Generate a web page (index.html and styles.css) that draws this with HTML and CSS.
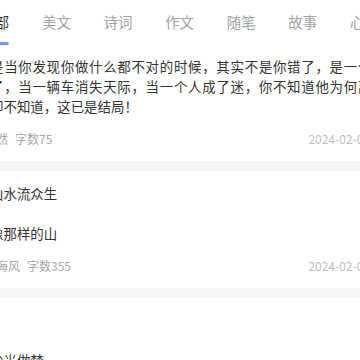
FILE: index.html
```html
<!DOCTYPE html>
<html lang="zh-CN">
<head>
<meta charset="utf-8">
<title>文章列表</title>
<link rel="stylesheet" href="styles.css">
</head>
<body>
<div class="page">
  <nav class="tabs">
    <div class="tab active"><span class="tab-text">全部</span><span class="tab-bar"></span></div>
    <div class="tab"><span class="tab-text">美文</span><span class="tab-bar"></span></div>
    <div class="tab"><span class="tab-text">诗词</span><span class="tab-bar"></span></div>
    <div class="tab"><span class="tab-text">作文</span><span class="tab-bar"></span></div>
    <div class="tab"><span class="tab-text">随笔</span><span class="tab-bar"></span></div>
    <div class="tab"><span class="tab-text">故事</span><span class="tab-bar"></span></div>
    <div class="tab"><span class="tab-text">心情</span><span class="tab-bar"></span></div>
  </nav>

  <article class="item">
    <div class="content">
      <span class="line spread">是当你发现你做什么都不对的时候，其实不是你错了，是一个人</span>
      <span class="line spread">了，当一辆车消失天际，当一个人成了迷，你不知道他为何离开</span>
      <span class="line">却不知道，这已是结局！</span>
    </div>
    <div class="meta"><span class="author">悠然</span><span class="count">字数75</span><span class="date">2024-02-08</span></div>
  </article>

  <article class="item">
    <div class="content">
      <span class="line">山水流众生</span>
      <span class="line empty"></span>
      <span class="line">像那样的山</span>
    </div>
    <div class="meta"><span class="author">听海风</span><span class="count">字数355</span><span class="date">2024-02-06</span></div>
  </article>

  <article class="item">
    <div class="content">
      <span class="line empty"></span>
      <span class="line empty"></span>
      <span class="line">尘光做梦</span>
    </div>
  </article>
</div>
</body>
</html>
```
FILE: styles.css
```css
html, body {
  margin: 0;
  padding: 0;
  overflow: hidden;
  background: #ffffff;
}

body {
  font-family: "Noto Sans CJK SC", "Noto Sans", sans-serif;
  color: #333333;
}

.page {
  width: 402px;
  margin-left: -20px;
}

.tabs {
  display: flex;
  gap: 32.8px;
  padding-left: 0.4px;
  height: 45px;
  background: #ffffff;
}

.tab {
  display: flex;
  flex-direction: column;
  align-items: stretch;
  padding-top: 12px;
  flex: none;
}

.tab-text {
  font-size: 14.4px;
  line-height: 20px;
  color: #a3a3a3;
  white-space: nowrap;
}

.tab-bar {
  height: 3px;
  margin-top: 10px;
  border-radius: 2px;
  background: transparent;
}

.tab.active .tab-text {
  color: #333333;
}

.tab.active .tab-bar {
  background: #6b9bf5;
}

.item {
  padding: 11px 12px 12px 10px;
  border-bottom: 10px solid #f5f5f5;
}

.item + .item {
  padding-top: 12px;
}

.content {
  display: flex;
  flex-direction: column;
  font-size: 13.44px;
  line-height: 20px;
  color: #333333;
}

.line {
  display: block;
  height: 20px;
  white-space: nowrap;
}

.line.spread {
  letter-spacing: 0.71px;
}

.meta {
  display: flex;
  align-items: center;
  margin-top: 13px;
  margin-left: -6px;
  font-size: 12px;
  line-height: 20px;
  color: #a6a6a6;
}

.author {
  margin-right: 7px;
}

.date {
  margin-left: auto;
  color: #bdbdbd;
}
```
